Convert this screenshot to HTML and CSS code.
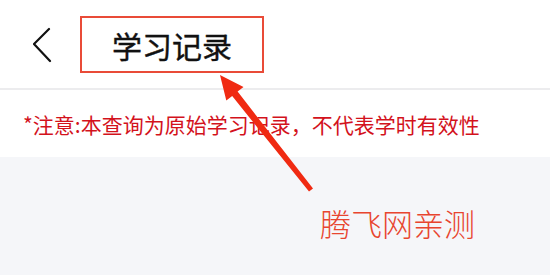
FILE: index.html
```html
<!DOCTYPE html>
<html lang="zh-CN">
<head>
<meta charset="utf-8">
<title>学习记录</title>
<link rel="stylesheet" href="styles.css">
</head>
<body>
<div class="page">
  <header class="nav">
    <span class="back">
      <svg width="20" height="36" viewBox="0 0 20 36"><polyline points="16,2 1,17 17,34" fill="none" stroke="#111" stroke-width="2.2" stroke-linecap="round" stroke-linejoin="round"/></svg>
    </span>
    <h1 class="title">学习记录</h1>
  </header>
  <div class="notice">*注意:本查询为原始学习记录，不代表学时有效性</div>
  <main class="content"></main>
  <svg class="arrow" width="550" height="275" viewBox="0 0 550 275">
    <polygon points="220,75 243.5,87 237.6,91.6 313,188.4 309,191.6 232.2,96 226.3,100.6" fill="#f02a12"/>
  </svg>
  <div class="mark">腾飞网亲测</div>
</div>
</body>
</html>
```
FILE: styles.css
```css
html, body {
  margin: 0;
  padding: 0;
}
body {
  width: 550px;
  height: 275px;
  overflow: hidden;
  font-family: "Noto Sans CJK SC", "Noto Sans", sans-serif;
  background: #f5f6f9;
}
.page {
  position: relative;
  width: 550px;
  height: 275px;
  display: flex;
  flex-direction: column;
}
.nav {
  height: 88px;
  background: #fff;
  display: flex;
  align-items: center;
  padding-left: 33px;
  border-bottom: 2px solid #ececee;
  box-shadow: 0 1px 3px rgba(0,0,0,0.04);
  box-sizing: content-box;
}
.back {
  display: flex;
  width: 20px;
  height: 36px;
  margin-top: 2px;
}
.title {
  margin: 0 0 0 27px;
  width: 180px;
  height: 53px;
  border: 2px solid #e94b38;
  display: flex;
  align-items: center;
  justify-content: center;
  font-size: 30px;
  font-weight: 400;
  color: #111;
  letter-spacing: 0;
  margin-top: 1px;
  -webkit-text-stroke: 0.4px #111;
}
.notice {
  height: 67px;
  background: #fff;
  display: flex;
  align-items: center;
  padding-left: 23px;
  font-size: 21px;
  color: #d3121c;
  white-space: nowrap;
}
.content {
  flex: 1;
  background: #f5f6f9;
}
.arrow {
  position: absolute;
  left: 0;
  top: 0;
}
.mark {
  position: absolute;
  left: 320px;
  top: 201px;
  font-size: 31px;
  font-weight: 300;
  color: #e8452f;
  line-height: 44px;
}
```
